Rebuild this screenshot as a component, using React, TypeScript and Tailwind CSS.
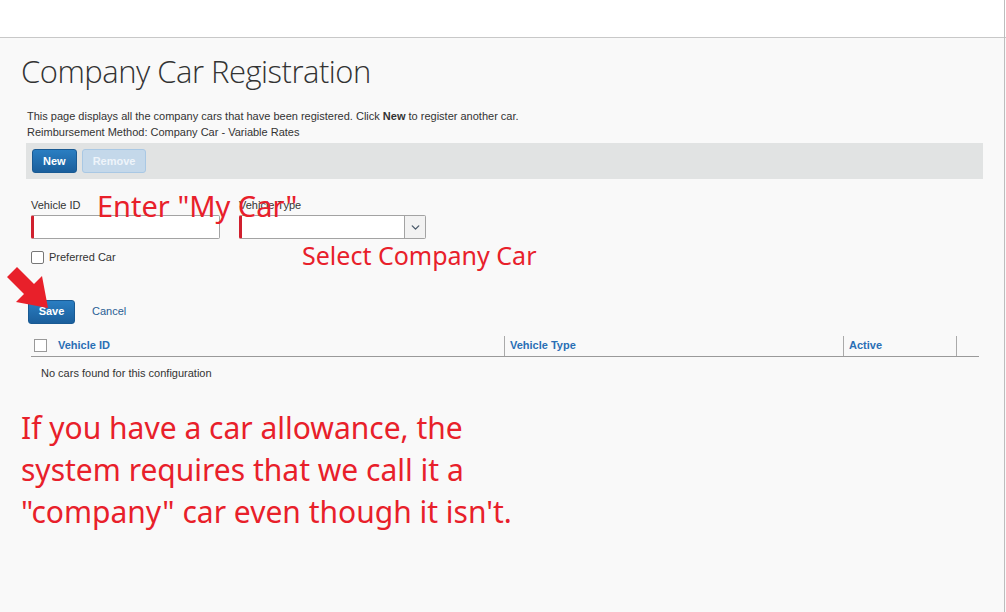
import { ChevronDown } from "lucide-react";

const annot = "font-['Noto_Sans',sans-serif] text-[#e8202a]";

function App() {
  return (
    <div className="w-[1006px] h-[612px] bg-[#f9f9f9] overflow-hidden relative font-['Liberation_Sans',Arial,sans-serif] text-[11px] text-[#333]">
      <div className="h-[38px] bg-white border-b border-[#c8c8c8]" />
      <div className="absolute right-[1px] top-0 bottom-0 w-[1px] bg-[#bdbdbd]" />

      <div className="relative">
        <h1 className="pl-[21px] pt-[13px] h-[70px] font-['Open_Sans',sans-serif] font-light text-[31px] leading-[40px] text-[#333] tracking-[-0.5px]">
          Company Car Registration
        </h1>

        <div className="pl-[27px] leading-[16px]">
          <p>
            This page displays all the company cars that have been registered. Click <b>New</b> to register another car.
          </p>
          <p>Reimbursement Method: Company Car - Variable Rates</p>
        </div>

        <div className="ml-[26px] mr-[23px] mt-[3px] h-[36px] bg-[#e1e3e3] flex items-center gap-[5px] px-[6px]">
          <button className="h-[24px] px-[10px] rounded-[3px] bg-gradient-to-b from-[#2a7ec2] to-[#1b5f9c] border border-[#195a93] text-white font-bold">
            New
          </button>
          <button className="h-[24px] px-[10px] rounded-[3px] bg-[#c4d8ea] border border-[#a9c8e4] text-[#eef4fa] font-bold">
            Remove
          </button>
        </div>

        <div className="pl-[31px] pt-[20px] flex gap-[19px]">
          <div className="flex flex-col">
            <label className="leading-[12px] mb-[4px]">Vehicle ID</label>
            <input className="w-[189px] h-[24px] bg-white border border-[#a3a3a3] border-l-[3px] border-l-[#d0202e] rounded-[2px]" />
          </div>
          <div className="flex flex-col">
            <label className="leading-[12px] mb-[4px]">Vehicle Type</label>
            <div className="w-[187px] h-[24px] bg-white border border-[#a3a3a3] border-l-[3px] border-l-[#d0202e] rounded-[2px] flex justify-end">
              <div className="w-[21px] h-full bg-[#f2f2f2] border-l border-[#a3a3a3] flex items-center justify-center">
                <ChevronDown size={13} strokeWidth={2.5} className="text-[#4a5a6a]" />
              </div>
            </div>
          </div>
        </div>

        <div className="pl-[31px] pt-[10px] flex items-center gap-[5px]">
          <span className="w-[13px] h-[13px] border border-[#777] rounded-[2px] bg-white" />
          <span>Preferred Car</span>
        </div>

        <div className="pl-[28px] pt-[34px] flex items-center gap-[17px]">
          <button className="h-[24px] w-[47px] rounded-[3px] bg-gradient-to-b from-[#2a7ec2] to-[#1b5f9c] border border-[#195a93] text-white font-bold">
            Save
          </button>
          <span className="text-[#2a5f95]">Cancel</span>
        </div>

        <div className="ml-[31px] mr-[27px] mt-[12px]">
          <div className="h-[21px] border-b border-[#9a9a9a] flex font-bold text-[#2a6fb5]">
            <div className="w-[473px] flex items-center">
              <span className="ml-[3px] w-[13px] h-[13px] border border-[#999] bg-white" />
              <span className="ml-[11px]">Vehicle ID</span>
            </div>
            <div className="w-[339px] border-l border-[#aaa] flex items-center pl-[5px]">Vehicle Type</div>
            <div className="w-[114px] border-l border-[#aaa] border-r flex items-center pl-[5px]">Active</div>
          </div>
          <p className="pl-[10px] pt-[8px]">No cars found for this configuration</p>
        </div>

        <div className={`${annot} pl-[21px] pt-[26px] text-[30px] leading-[42px] w-[540px]`}>
          <p>If you have a car allowance, the</p>
          <p>system requires that we call it a</p>
          <p>"company" car even though it isn't.</p>
        </div>

        <span className={`${annot} absolute left-[97px] top-[148px] text-[29px] leading-[40px]`}>Enter "My Car"</span>
        <span className={`${annot} absolute left-[302px] top-[200px] text-[25px] leading-[34px]`}>Select Company Car</span>

        <svg className="absolute left-[4px] top-[226px]" width="48" height="48" viewBox="0 0 48 48">
          <polygon points="3,13 13,3 30,20 38,12 44,44 12,38 20,30" fill="#e8202a" />
        </svg>
      </div>
    </div>
  );
}

export default App;
